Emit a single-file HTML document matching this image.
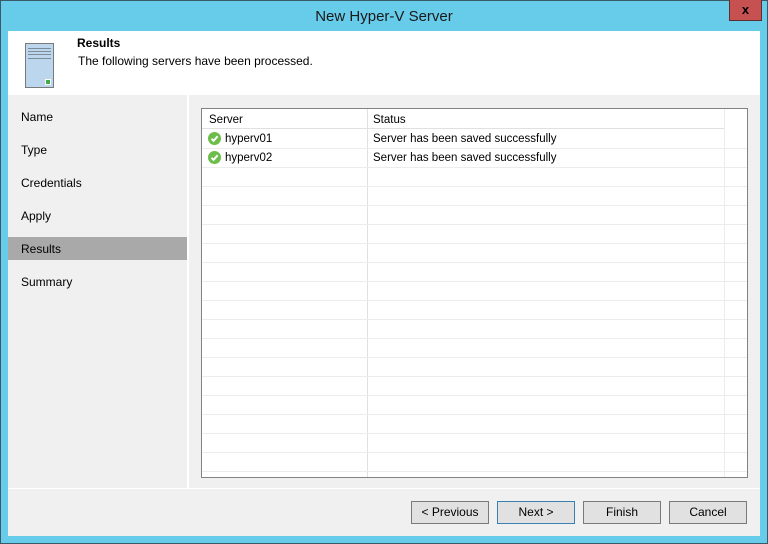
<!DOCTYPE html>
<html><head><style>
*{margin:0;padding:0;box-sizing:border-box}
body{width:768px;height:544px;position:relative;background:#67cbea;font-family:"Liberation Sans",sans-serif;font-size:12px;color:#000;overflow:hidden}
.frame{position:absolute;left:0;top:0;width:768px;height:544px;border:1px solid #3b5a68}
.title{position:absolute;top:8px;left:0;width:768px;text-align:center;font-size:15px;color:#1a1a1a}
.close{position:absolute;left:729px;top:0;width:33px;height:21px;background:#c75050;border:1px solid #5a3030;border-top:none;color:#000;font-weight:bold;font-size:13px;text-align:center;line-height:19px}
.content{position:absolute;left:8px;top:31px;width:752px;height:505px;background:#f0f0f0}
.header{position:absolute;left:0;top:0;width:752px;height:64px;background:#fff}
.icon{position:absolute;left:17px;top:12px;width:29px;height:45px;border:1px solid #7a7a7a;background:#bcd6ee}
.icon i{position:absolute;left:2px;width:23px;height:1px;background:#7d8c99}
.nav{position:absolute;left:0;top:64px;width:179px;height:393px;background:#f0f0f0}
.nav .it{position:absolute;left:13px;font-size:12px}
.sel{position:absolute;left:0;top:142px;width:179px;height:23px;background:#a9a9a9}
.sep{position:absolute;left:179px;top:64px;width:2px;height:393px;background:#fff}
.table{position:absolute;left:193px;top:77px;width:547px;height:370px;border:1px solid #828282;background:#fff;overflow:hidden}
.hline{position:absolute;left:0;width:545px;height:1px;background:#ececec}
.vline{position:absolute;top:0;width:1px;height:370px;background:#ececec}
.cell{position:absolute;font-size:11.5px}
.ok{position:absolute;width:13px;height:13px;border-radius:50%;background:#6dbd4a}
.btn{position:absolute;top:470px;width:78px;height:23px;border:1px solid #7a7a7a;background:#e1e1e1;text-align:center;line-height:21px;font-size:12px}
.bsep{position:absolute;left:0;top:457px;width:752px;height:1px;background:#fff}
</style></head><body>
<div class="frame"></div>
<div class="title">New Hyper-V Server</div>
<div class="close">x</div>
<div class="content">
 <div class="header">
  <div class="icon"><i style="top:4px"></i><i style="top:7px"></i><i style="top:10px"></i><i style="top:14px"></i><span style="position:absolute;right:2px;bottom:2px;width:6px;height:6px;background:#3fae49;border:1px solid #fff"></span></div>
  <div style="position:absolute;left:69px;top:5px;font-weight:bold;font-size:12px">Results</div>
  <div style="position:absolute;left:70px;top:23px;font-size:12px">The following servers have been processed.</div>
 </div>
 <div class="nav">
  <div class="sel"></div>
  <div class="it" style="top:15px">Name</div>
  <div class="it" style="top:48px">Type</div>
  <div class="it" style="top:81px">Credentials</div>
  <div class="it" style="top:114px">Apply</div>
  <div class="it" style="top:147px">Results</div>
  <div class="it" style="top:180px">Summary</div>
 </div>
 <div class="sep"></div>
 <div class="bsep"></div>
 <div class="table">
  <div style="position:absolute;left:0;top:0;width:523px;height:20px;border-bottom:1px solid #e0e0e0;border-right:1px solid #e0e0e0"></div>
  <div class="vline" style="left:165px;background:#e0e0e0"></div>
  <div class="vline" style="left:522px"></div>
  <div class="hline" style="top:39px"></div><div class="hline" style="top:58px"></div><div class="hline" style="top:77px"></div><div class="hline" style="top:96px"></div><div class="hline" style="top:115px"></div><div class="hline" style="top:134px"></div><div class="hline" style="top:153px"></div><div class="hline" style="top:172px"></div><div class="hline" style="top:191px"></div><div class="hline" style="top:210px"></div><div class="hline" style="top:229px"></div><div class="hline" style="top:248px"></div><div class="hline" style="top:267px"></div><div class="hline" style="top:286px"></div><div class="hline" style="top:305px"></div><div class="hline" style="top:324px"></div><div class="hline" style="top:343px"></div><div class="hline" style="top:362px"></div>
  <div class="cell" style="left:7px;top:5px">Server</div>
  <div class="cell" style="left:171px;top:5px">Status</div>
  <div class="ok" style="left:6px;top:23px"></div>
  <svg style="position:absolute;left:6px;top:23px" width="13" height="13"><path d="M3.5 6.8 L5.6 8.8 L9.6 4.3" stroke="#fff" stroke-width="2" fill="none"/></svg>
  <div class="cell" style="left:23px;top:24px">hyperv01</div>
  <div class="cell" style="left:171px;top:24px">Server has been saved successfully</div>
  <div class="ok" style="left:6px;top:42px"></div>
  <svg style="position:absolute;left:6px;top:42px" width="13" height="13"><path d="M3.5 6.8 L5.6 8.8 L9.6 4.3" stroke="#fff" stroke-width="2" fill="none"/></svg>
  <div class="cell" style="left:23px;top:43px">hyperv02</div>
  <div class="cell" style="left:171px;top:43px">Server has been saved successfully</div>
 </div>
 <div class="btn" style="left:403px">&lt; Previous</div>
 <div class="btn" style="left:489px;border-color:#3c7fb1">Next &gt;</div>
 <div class="btn" style="left:575px">Finish</div>
 <div class="btn" style="left:661px">Cancel</div>
</div>
</body></html>
